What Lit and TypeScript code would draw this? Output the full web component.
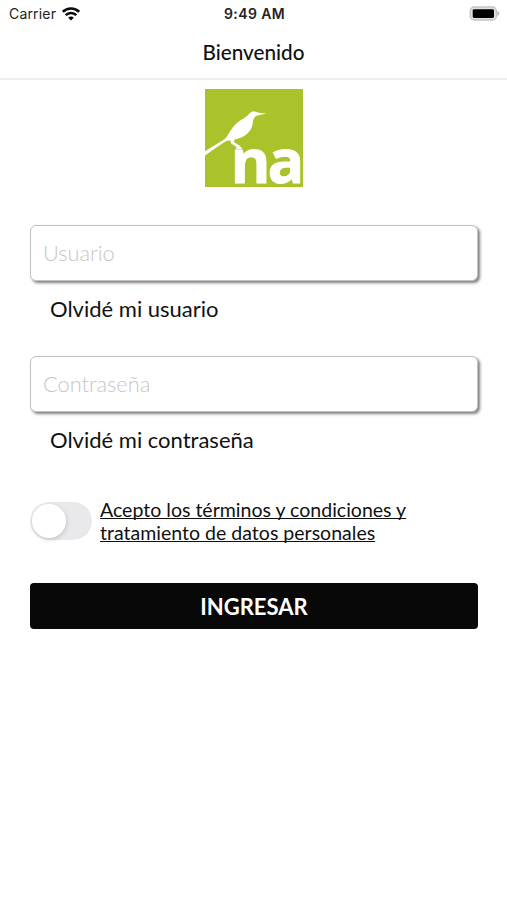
import { LitElement, html, css } from "lit";
import { customElement, property, state } from "lit/decorators.js";

@customElement("status-bar")
class StatusBar extends LitElement {
  static styles = css`
    :host {
      display: grid;
      grid-template-columns: 1fr auto 1fr;
      align-items: center;
      box-sizing: border-box;
      height: 28px;
      padding: 0 7px 1px 9px;
      font-family: Inter, "Liberation Sans", sans-serif;
      color: #222;
    }
    .carrier { display: flex; align-items: center; gap: 6px; font-size: 14px; letter-spacing: 0.18px; }
    .time { font-size: 14px; font-weight: 600; letter-spacing: 0.4px; }
    .battery { justify-self: end; }
    svg { display: block; }
  `;

  render() {
    return html`
      <div class="carrier">
        <span>Carrier</span>
        <svg width="18" height="14" viewBox="0 0 18 14" fill="none" stroke="#080808" stroke-width="2.6">
          <path d="M0.9 4.8C5.2 0.4 12.8 0.4 17.1 4.8" />
          <path d="M3.7 8.1C6.6 5.2 11.4 5.2 14.3 8.1" />
          <path d="M6.2 10.7C7.8 9.1 10.2 9.1 11.8 10.7L9 13.5Z" fill="#080808" stroke="none" />
        </svg>
      </div>
      <div class="time">9:49 AM</div>
      <svg class="battery" width="31" height="15" viewBox="0 0 31 15">
        <rect x="1.2" y="1" width="26.2" height="13" rx="4" fill="#e0e0e0" stroke="#c4c4c4" stroke-width="1.3" />
        <rect x="3.7" y="3.2" width="21.3" height="8.8" rx="1.4" fill="#000" />
        <path d="M28.3 4.8C31 6.4 31 8.6 28.3 10.2Z" fill="#b5b5b5" />
      </svg>
    `;
  }
}

@customElement("brand-logo")
class BrandLogo extends LitElement {
  static styles = css`
    :host { display: block; width: 98px; height: 98px; }
    svg { display: block; overflow: visible; }
    .name {
      font: 700 61px "Open Sans", "Noto Sans", sans-serif;
      letter-spacing: -3px;
      fill: #fff;
      stroke: #fff;
      stroke-width: 0.8px;
    }
  `;

  render() {
    return html`
      <svg width="98" height="98" viewBox="0 0 98 98">
        <rect width="98" height="98" fill="#abc32b" />
        <path
          fill="#fff"
          d="M0 62.3L19.5 50.2C22.5 47.3 23.6 44.3 26 41C28.8 36.2 32.6 32.4 38.5 29.4C42.6 27.2 43.6 25.3 45.2 23.8C47 22 50.2 21.9 52.4 23.6L61.3 24.6L52.6 26.6C48.8 27.8 48.2 30.2 47.8 33.8C47 39.8 43.8 44.4 38.8 47.2C35.5 49 32 49.9 29.5 50.5L28.9 53L34.7 56.8L37.4 60H31L31.6 58L26.2 54.6L25.4 51.7C23.7 51.2 21.8 51.6 20 52.8C13.2 57.2 6.5 62 0 66.4Z"
        />
        <text class="name" x="25.4" y="94">na</text>
      </svg>
    `;
  }
}

@customElement("text-field")
class TextField extends LitElement {
  @property() placeholder = "";
  @property() type = "text";

  static styles = css`
    :host { display: block; }
    .input {
      display: block;
      box-sizing: border-box;
      width: 100%;
      height: 56px;
      padding: 0 12px 2px;
      border: 1px solid #c2c2c2;
      border-radius: 6px;
      outline: none;
      background: #fff;
      box-shadow: 2px 2px 3px rgba(0, 0, 0, 0.5);
      font: 300 21.8px Lato, sans-serif;
      color: #080808;
    }
    .input::placeholder { color: #c6c6c6; opacity: 1; }
  `;

  render() {
    return html`<input class="input" type=${this.type} placeholder=${this.placeholder} />`;
  }
}

@customElement("toggle-switch")
class ToggleSwitch extends LitElement {
  @state() private on = false;

  static styles = css`
    :host { display: block; }
    .track {
      display: flex;
      align-items: center;
      box-sizing: border-box;
      width: 62px;
      height: 38px;
      padding: 0 2px;
      border: 0;
      border-radius: 19px;
      background: #e9e9eb;
    }
    .track.on { justify-content: flex-end; background: #abc32b; }
    .knob { width: 34px; height: 34px; border-radius: 50%; background: #fff; box-shadow: 1px 2px 4px rgba(0, 0, 0, 0.14); }
  `;

  render() {
    return html`
      <button class="track ${this.on ? "on" : ""}" role="switch" aria-checked=${this.on} @click=${() => (this.on = !this.on)}>
        <span class="knob"></span>
      </button>
    `;
  }
}

@customElement("app-root")
class AppRoot extends LitElement {
  static styles = css`
    :host {
      display: block;
      min-height: 900px;
      background: #fff;
      font-family: Lato, sans-serif;
      color: #111;
    }
    .title {
      display: flex;
      align-items: center;
      justify-content: center;
      box-sizing: border-box;
      height: 52px;
      margin: 0;
      padding-bottom: 3px;
      border-bottom: 2px solid #efefef;
      font-size: 20.7px;
      font-weight: 500;
    }
    .form { display: flex; flex-direction: column; padding: 9px 29px 0 30px; }
    .logo { align-self: center; margin-bottom: 38px; }
    .link {
      height: 28px;
      margin: 14px 0 33px 20px;
      font-size: 22px;
      line-height: 28px;
    }
    .terms { display: flex; align-items: center; gap: 8px; height: 48px; margin-top: 10px; }
    .terms-text {
      font-size: 19.55px;
      line-height: 23.5px;
      text-decoration: underline;
      text-decoration-skip-ink: none;
      text-decoration-thickness: 1.3px;
    }
    .submit {
      height: 46px;
      margin-top: 38px;
      padding: 0;
      border: 0;
      border-radius: 4px;
      background: #080808;
      color: #fff;
      font: 700 22px Lato, sans-serif;
    }
  `;

  render() {
    return html`
      <status-bar></status-bar>
      <h1 class="title">Bienvenido</h1>
      <main class="form">
        <brand-logo class="logo"></brand-logo>
        <text-field placeholder="Usuario"></text-field>
        <div class="link">Olvidé mi usuario</div>
        <text-field type="password" placeholder="Contraseña"></text-field>
        <div class="link">Olvidé mi contraseña</div>
        <div class="terms">
          <toggle-switch></toggle-switch>
          <span class="terms-text">Acepto los términos y condiciones y<br />tratamiento de datos personales</span>
        </div>
        <button class="submit">INGRESAR</button>
      </main>
    `;
  }
}
